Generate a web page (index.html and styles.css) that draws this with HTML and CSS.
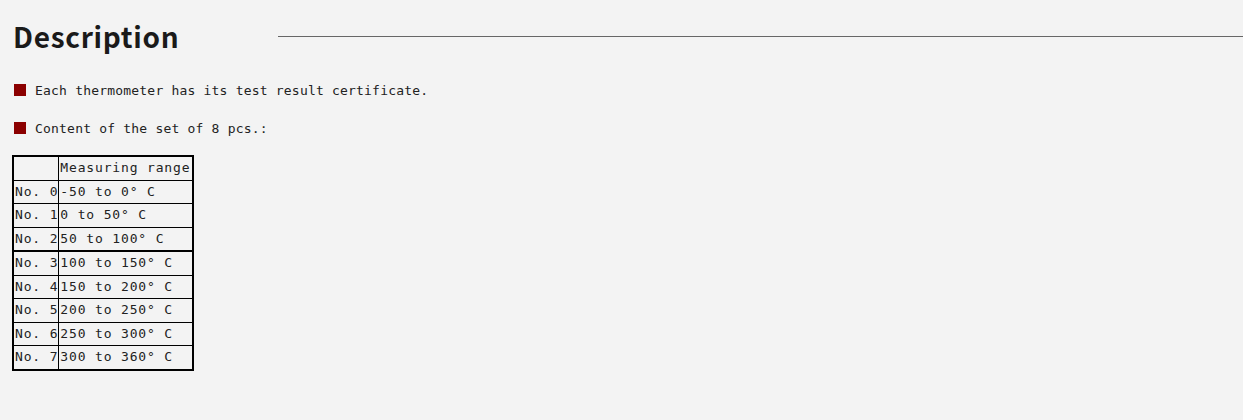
FILE: index.html
```html
<!DOCTYPE html>
<html>
<head>
<title>Description</title>
<link rel="stylesheet" href="styles.css">
</head>
<body>

<div class="page">
	<div class="caption">
		<h2 class="caption_title">Description</h2>
		<div class="caption_rule"></div>
	</div>
	<ul class="notes">
		<li>Each thermometer has its test result certificate.</li>
		<li>Content of the set of 8 pcs.:</li>
	</ul>
	<table class="range_table">
		<tr><td class="no_col"></td><td class="range_col">Measuring range</td></tr>
		<tr><td>No. 0</td><td>-50 to 0° C</td></tr>
		<tr><td>No. 1</td><td>0 to 50° C</td></tr>
		<tr><td>No. 2</td><td>50 to 100° C</td></tr>
		<tr class="group_start"><td>No. 3</td><td>100 to 150° C</td></tr>
		<tr><td>No. 4</td><td>150 to 200° C</td></tr>
		<tr><td>No. 5</td><td>200 to 250° C</td></tr>
		<tr><td>No. 6</td><td>250 to 300° C</td></tr>
		<tr><td>No. 7</td><td>300 to 360° C</td></tr>
	</table>
</div>

</body>
</html>
```

FILE: styles.css
```css
	body
	{
		margin : 0;
		background-color : #f3f3f3;
		color : #111;
		font-family : "DejaVu Sans Mono", monospace;
	}
	.page
	{
		padding : 12px 0 0 12px;
	}
	.caption
	{
		display : flex;
		align-items : center;
	}
	.caption_title
	{
		width : 265px;
		margin : 0;
		padding-left : 1px;
		font-family : "Noto Sans CJK JP", "Noto Sans", sans-serif;
		font-size : 28px;
		font-weight : bold;
		letter-spacing : 0.7px;
		line-height : 48px;
		color : #1a1a1a;
	}
	.caption_rule
	{
		flex : 1;
		border-top : 1px solid #666;
	}
	.notes
	{
		list-style : none;
		margin : 11px 0 0 0;
		padding : 0;
	}
	.notes li
	{
		display : flex;
		align-items : center;
		gap : 9px;
		height : 38px;
		font-size : 13px;
		letter-spacing : 0.2px;
		color : #222;
	}
	.notes li::before
	{
		content : "";
		width : 12px;
		height : 12px;
		margin-left : 2px;
		background-color : #8b0000;
	}
	.range_table
	{
		margin-top : 8px;
		border-collapse : collapse;
		border : 2px solid #000;
		font-size : 13px;
		letter-spacing : 0.84px;
		color : #222;
	}
	.range_table td
	{
		height : 22.5px;
		padding : 0 0 0 1px;
		border : 1px solid #000;
		white-space : pre;
		line-height : 22px;
	}
	.no_col
	{
		width : 43px;
	}
	.range_col
	{
		width : 132px;
	}
	.group_start td
	{
		border-top-width : 2px;
	}
```
